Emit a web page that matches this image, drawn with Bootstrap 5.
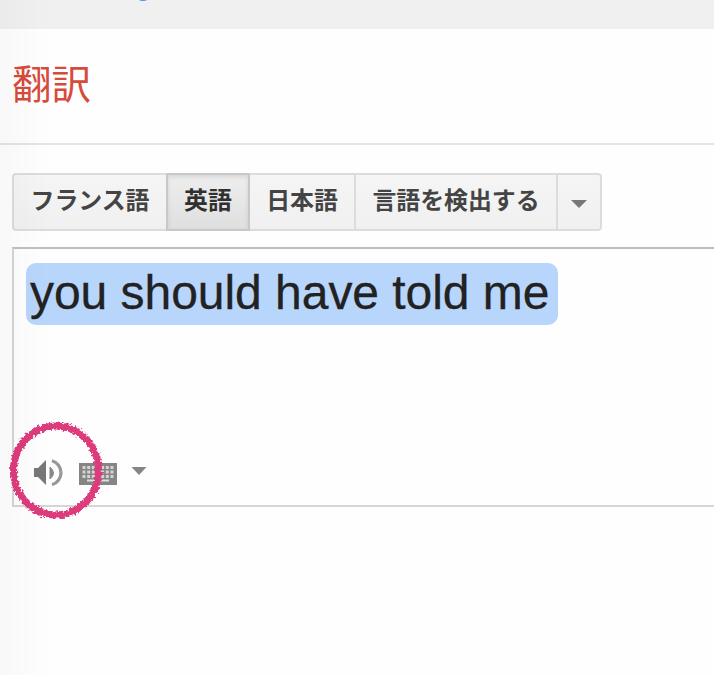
<!DOCTYPE html>
<html lang="ja">
<head>
<meta charset="utf-8">
<meta name="viewport" content="width=device-width, initial-scale=1">
<title>翻訳</title>
<link href="https://cdn.jsdelivr.net/npm/bootstrap@5.3.0/dist/css/bootstrap.min.css" rel="stylesheet">
<style>
body{font-family:"Liberation Sans","Noto Sans CJK JP",sans-serif;height:675px;background:#fefefe}
.topbar{height:29px;background:#f0f0f0}
.logo-tail{width:18px;height:18px;margin-left:134px;margin-top:-17px;border-radius:50%;background:#4d8bf5}
.titlebar{height:116px;border-bottom:2px solid #e4e4e4;padding-left:12px}
.title-text{font:400 39.5px/56px "Noto Sans CJK JP",sans-serif;color:#d64b3c;padding-top:25px}
.langs{width:590px;height:58px;margin:28px 0 0 12px}
.langs .btn{--bs-btn-border-radius:4px;border:2px solid #dcdcdc;background:linear-gradient(#f5f5f5,#f0f0f0);color:#444;font:700 23.9px/44px "Noto Sans CJK JP",sans-serif;padding:0 0 6px;flex:none}
.langs .btn+.btn{margin-left:-2px!important}
.langs .btn.active{border-color:#c8c8c8;background:linear-gradient(#eee,#dfdfdf);color:#303030;box-shadow:inset 0 2px 4px rgba(0,0,0,.1)}
.w-fr{width:156px}.w-en{width:84px}.w-ja{width:108px}.w-detect{width:204px}.langs .w-more{width:46px;padding:4px 0 0}
.source{height:260px;margin:16px 0 0 12px;border:2px solid #d5d5d5;border-top-color:#bfbfbf;border-right:0;padding:14px 0 0 12px}
.phrase{width:532px;height:62px;border-radius:10px;background:#b8d5fb;color:#222;font-size:48px;line-height:60px;letter-spacing:-.04px;padding-left:4px;white-space:nowrap;-webkit-text-stroke:.3px #222}
.tools{height:24px;margin-top:132px;padding-left:6px}
.speaker{margin-right:15px}
.keys{margin-right:14px}
.marker{left:4px;top:416px}
.edge-shade{inset:0 auto 0 0;width:50px;background:linear-gradient(90deg,rgba(0,0,0,.023),rgba(0,0,0,.012) 50%,transparent);pointer-events:none}
</style>
<script src="https://cdn.jsdelivr.net/npm/bootstrap@5.3.0/dist/js/bootstrap.bundle.min.js"></script>
</head>
<body class="position-relative overflow-hidden">
<header class="topbar overflow-hidden"><div class="logo-tail"></div></header>
<div class="titlebar"><h1 class="title-text m-0">翻訳</h1></div>
<main>
<div class="langs btn-group d-flex" role="group">
<button class="btn w-fr">フランス語</button>
<button class="btn w-en active">英語</button>
<button class="btn w-ja">日本語</button>
<button class="btn w-detect">言語を検出する</button>
<button class="btn w-more d-flex align-items-center justify-content-center" aria-label="他の言語"><svg width="16" height="8" viewBox="0 0 16 8"><path d="M0 0h16L8 8z" fill="#777"/></svg></button>
</div>
<section class="source">
<div class="phrase">you should have told me</div>
<div class="tools d-flex align-items-start">
<svg class="speaker" width="32" height="30" viewBox="32 457 32 30"><path d="M34 468h4l8-8v25l-8-8h-4z" fill="#787878"/><path d="M50 467q7 6 0 12z" fill="#888" stroke="#888"/><path d="M52 460.800a12.500 12.500 0 0 1 0 24" fill="none" stroke="#989898" stroke-width="3.200"/></svg>
<svg class="keys" width="38" height="30" viewBox="79 457 38 30"><path d="M79 463h38v22H79z" fill="#858585"/><path d="M82.500 467.500h31M82.500 472h31M82.500 476.500h31" stroke="#d4d4d4" stroke-width="3" stroke-dasharray="3 1.660"/><path d="M87 480.500h22" stroke="#ddd" stroke-width="2"/></svg>
<svg width="16" height="30" viewBox="131 457 16 30"><path d="M131.500 467h15l-7.500 8z" fill="#858585"/></svg>
</div>
</section>
</main>
<svg class="marker position-absolute" width="106" height="110" viewBox="4 416 106 110" aria-hidden="true">
<defs><filter id="chalk" x="-10%" y="-10%" width="120%" height="120%"><feTurbulence type="fractalNoise" baseFrequency=".4" numOctaves="2" seed="4"/><feDisplacementMap in="SourceGraphic" scale="6" xChannelSelector="R" yChannelSelector="G"/></filter></defs>
<ellipse cx="56" cy="470.500" rx="42.500" ry="44.500" fill="none" stroke="#dd3b7c" stroke-width="7" filter="url(#chalk)"/>
</svg>
<div class="edge-shade position-absolute"></div>
</body>
</html>
